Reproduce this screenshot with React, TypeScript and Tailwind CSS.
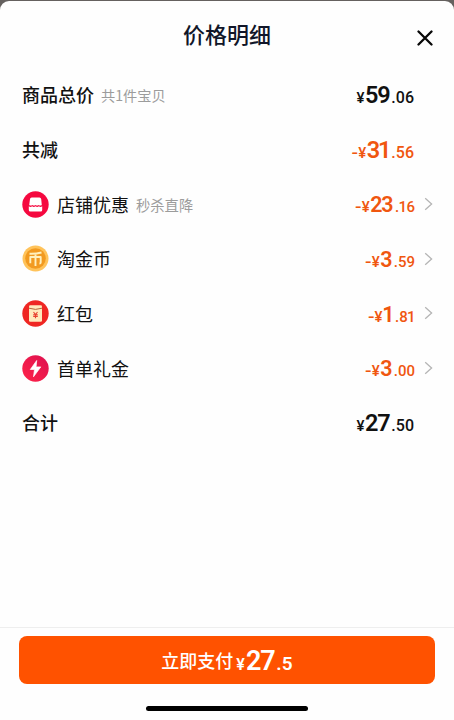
import React from 'react';

type PriceProps = {
  whole: string;
  cents: string;
  minus?: boolean;
  small?: boolean;
};

// A "1" sits tighter than the other digits
const Digits: React.FC<{ value: string }> = ({ value }) => (
  <>
    {value.split('').map((d, i) => (
      <span key={i} className={d === '1' ? '-mx-[0.04em]' : ''}>{d}</span>
    ))}
  </>
);

const Price: React.FC<PriceProps> = ({ whole, cents, minus, small }) => (
  <span className="flex items-baseline pt-[2px] font-[Roboto,sans-serif] font-medium leading-none">
    {minus && <span className="font-[Inter,sans-serif] text-[15px] font-semibold">-</span>}
    <span className="mr-[0.5px] text-[15px] font-medium">¥</span>
    <span className={small ? 'text-[21.5px] font-semibold tracking-[-1.2px]' : 'text-[23.5px] font-semibold tracking-[-1.2px]'}>
      <Digits value={whole} />
    </span>
    <span className={small ? 'ml-[2.5px] text-[15px]' : 'ml-[2px] text-[16px]'}>
      .<Digits value={cents} />
    </span>
  </span>
);

const Chevron: React.FC = () => (
  <svg className="ml-[9px] h-[14px] w-[9px]" viewBox="0 0 9 14" fill="none" stroke="#b5b5b5" strokeWidth="1.3">
    <path d="M1.2 1.2 7.6 7 1.2 12.8" />
  </svg>
);

const ShopIcon: React.FC = () => (
  <svg className="h-[27px] w-[27px]" viewBox="0 0 27 27">
    <circle cx="13.5" cy="13.5" r="13.2" fill="#f5083f" />
    <path d="M9.7 6.5h7.8q1.4 0 1.7 1.5l.6 5.9q-1.6 1.2-3.15 0-1.55 1.2-3.15 0-1.55 1.2-3.15 0-1.6 1.2-3.15 0L8 8q.2-1.500 1.7-1.500Z" fill="#fff" />
    <path d="M6.8 15.3q1.7 1.2 3.35 0 1.7 1.2 3.35 0 1.7 1.2 3.35 0 1.7 1.2 3.35 0v3.6q0 1.5-1.5 1.5H8.3q-1.5 0-1.5-1.5Z" fill="#fff" />
  </svg>
);

const CoinIcon: React.FC = () => (
  <svg className="h-[27px] w-[27px]" viewBox="0 0 27 27" fill="none">
    <circle cx="13.5" cy="13.5" r="13" fill="#ffc35a" />
    <circle cx="13.5" cy="13.5" r="10.3" fill="#f29a20" />
    <path d="M7.5 8.700q6 .3 12-1.200M8.300 18.300v-6.300h10.400v5.500q0 1-1.300 1M13.500 8.500v12.500" stroke="#fff0bd" strokeWidth="1.9" strokeLinejoin="round" />
  </svg>
);

const RedPacketIcon: React.FC = () => (
  <svg className="h-[27px] w-[27px]" viewBox="0 0 27 27" fill="none">
    <circle cx="13.5" cy="13.5" r="13.2" fill="#ef2723" />
    <rect x="7" y="5.3" width="13" height="16.5" rx="1.3" fill="#ffe9bd" />
    <path d="M7 8.2q6.5 2.4 13 0" stroke="#b9663a" strokeWidth="1" />
    <path d="m11.5 12 2 2.5 2-2.5M11.200 14.7h4.6M11.200 16.4h4.6M13.5 14.5v3.7" stroke="#e8402f" strokeWidth="1.1" />
  </svg>
);

const BoltIcon: React.FC = () => (
  <svg className="h-[27px] w-[27px]" viewBox="0 0 27 27">
    <defs>
      <linearGradient id="bolt" x1="0" y1="1" x2="1" y2="0">
        <stop stopColor="#ff2448" />
        <stop offset="1" stopColor="#dd1050" />
      </linearGradient>
    </defs>
    <circle cx="13.5" cy="13.5" r="13.2" fill="url(#bolt)" />
    <path d="M14.7 5.5 8.3 14.5h4.2l-1 7.3 7.3-9.9h-4.7Z" fill="#fff" stroke="#fff" strokeWidth=".7" strokeLinejoin="round" />
  </svg>
);

const discounts = [
  { label: '店铺优惠', note: '秒杀直降', whole: '23', cents: '16', Icon: ShopIcon },
  { label: '淘金币', whole: '3', cents: '59', Icon: CoinIcon },
  { label: '红包', whole: '1', cents: '81', Icon: RedPacketIcon },
  { label: '首单礼金', whole: '3', cents: '00', Icon: BoltIcon },
];

export default function App() {
  return (
    <div className="h-[720px] w-full bg-[#65615f] pt-px font-['Noto_Sans_CJK_SC',sans-serif] text-[#111]">
      <div className="flex h-[719px] flex-col overflow-hidden rounded-t-[9px] bg-[#fefefe]">
        <header className="grid h-[66.4px] shrink-0 grid-cols-[1fr_auto_1fr] items-center">
          <span />
          <h1 className="text-[22px] font-medium leading-[64px]">
            <span className="block pb-[2px] text-[#111629]">价格明细</span>
          </h1>
          <button className="mr-[21px] mt-[8px] justify-self-end" aria-label="关闭">
            <svg className="h-4 w-4" viewBox="0 0 16 16" fill="none" stroke="#080808" strokeWidth="2.3" strokeLinecap="round">
              <path d="m1.5 1.5 13 13m0-13-13 13" />
            </svg>
          </button>
        </header>

        <main className="flex-1 pl-[22px] pr-[21px] text-[18px]">
          <div className="flex h-[54.7px] items-center pr-[19px]">
            <span className="font-medium">商品总价</span>
            <span className="ml-[7px] pt-[2px] text-[14.2px] text-[#9c9c9c]">共1件宝贝</span>
            <span className="ml-auto"><Price whole="59" cents="06" /></span>
          </div>
          <div className="flex h-[54.7px] items-center pr-[19px]">
            <span className="font-medium">共减</span>
            <span className="ml-auto text-[#f0560f]"><Price minus whole="31" cents="56" /></span>
          </div>
          {discounts.map(({ label, note, whole, cents, Icon }) => (
            <div key={label} className="flex h-[54.7px] items-center">
              <Icon />
              <span className="ml-[8px]">{label}</span>
              {note && <span className="ml-[7px] pt-[2px] text-[14.3px] text-[#9c9c9c]">{note}</span>}
              <span className="ml-auto text-[#f0560f]"><Price minus small whole={whole} cents={cents} /></span>
              <Chevron />
            </div>
          ))}
          <div className="flex h-[54.7px] items-center pr-[19px]">
            <span className="font-medium">合计</span>
            <span className="ml-auto"><Price whole="27" cents="50" /></span>
          </div>
        </main>

        <footer className="h-[93px] shrink-0 border-t border-[#eee] px-[19px] pt-2">
          <button className="flex h-[48px] w-full items-center justify-center rounded-[8px] bg-[#ff5200] text-white">
            <span className="text-[18px] font-medium">立即支付</span>
            <span className="ml-[3px] flex items-baseline pt-[2px] font-[Roboto,sans-serif] font-semibold leading-none">
              <span className="mr-px text-[16px]">¥</span>
              <span className="text-[27px] tracking-[-1.2px]">27</span>
              <span className="ml-[2px] text-[19px]">.5</span>
            </span>
          </button>
          <div className="mx-auto mt-[22px] h-[5px] w-[162px] rounded-full bg-black" />
        </footer>
      </div>
    </div>
  );
}
